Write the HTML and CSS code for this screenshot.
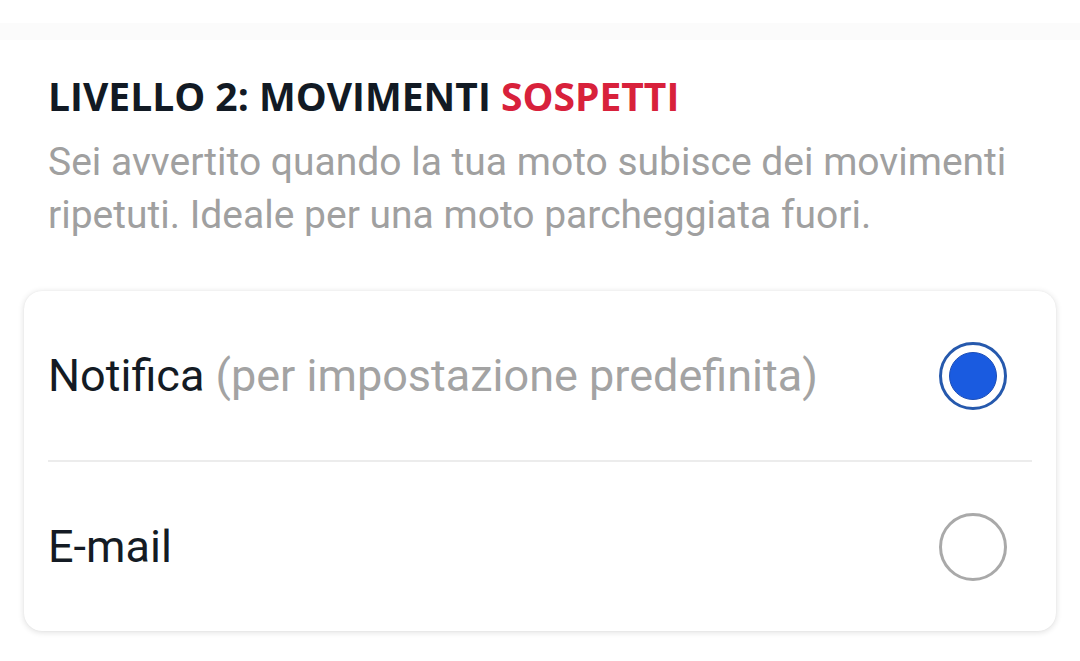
FILE: index.html
```html
<!DOCTYPE html>
<html>
<head>
    <meta name="viewport" content="width=device-width, initial-scale=1">
    <title>Livello 2 - Movimenti sospetti</title>
    <link rel="stylesheet" href="styles.css">
</head>
<body>
    <div class="top-band"></div>

    <div class="section">
        <h2 class="level-title">LIVELLO 2: MOVIMENTI <span class="accent">SOSPETTI</span></h2>
        <p class="level-desc">Sei avvertito quando la tua moto subisce dei movimenti ripetuti. Ideale per una moto parcheggiata fuori.</p>

        <form class="options">
            <label class="option">
                <span class="option-label">Notifica <span class="hint">(per impostazione predefinita)</span></span>
                <input type="radio" name="alert" value="notify" checked>
                <span class="radio"></span>
            </label>
            <label class="option">
                <span class="option-label">E-mail</span>
                <input type="radio" name="alert" value="email">
                <span class="radio"></span>
            </label>
        </form>
    </div>
</body>
</html>
```
FILE: styles.css
```css
html, body {
    margin: 0;
    padding: 0;
    background: #fff;
}

body {
    font-family: Roboto, "Noto Sans", sans-serif;
    width: 1080px;
    height: 661px;
    overflow: hidden;
}

.top-band {
    height: 17px;
    margin-top: 23px;
    background: #fbfbfb;
}

.section {
    padding: 0 24px;
}

.level-title {
    font-family: "Open Sans", sans-serif;
    font-weight: 700;
    font-size: 39px;
    color: #121a24;
    margin: 31px 24px 0;
    line-height: 50px;
}

.level-title .accent {
    color: #d8213b;
}

.level-desc {
    font-size: 39px;
    line-height: 53px;
    color: #a0a0a0;
    margin: 15px 24px 0;
}

.options {
    margin-top: 49px;
    background: #fff;
    border-radius: 18px;
    box-shadow: 0 1px 6px rgba(0, 0, 0, 0.14), 0 0 1px rgba(0, 0, 0, 0.08);
    padding: 0 24px;
}

.option {
    display: flex;
    align-items: center;
    justify-content: space-between;
    height: 169px;
    padding-right: 25px;
    font-size: 45px;
    color: #141b24;
}

.option + .option {
    border-top: 2px solid #ececec;
}

.option .hint {
    color: #a3a3a3;
}

.option input {
    display: none;
}

.radio {
    width: 62px;
    height: 62px;
    border: 3px solid #a9a9a9;
    border-radius: 50%;
    box-sizing: content-box;
    position: relative;
}

input:checked + .radio {
    border-color: #2659ad;
}

input:checked + .radio::after {
    content: "";
    position: absolute;
    left: 7px;
    top: 7px;
    width: 46px;
    height: 46px;
    border-radius: 50%;
    background: #1a5be0;
    border: 1px solid #1d4fb8;
}
```
